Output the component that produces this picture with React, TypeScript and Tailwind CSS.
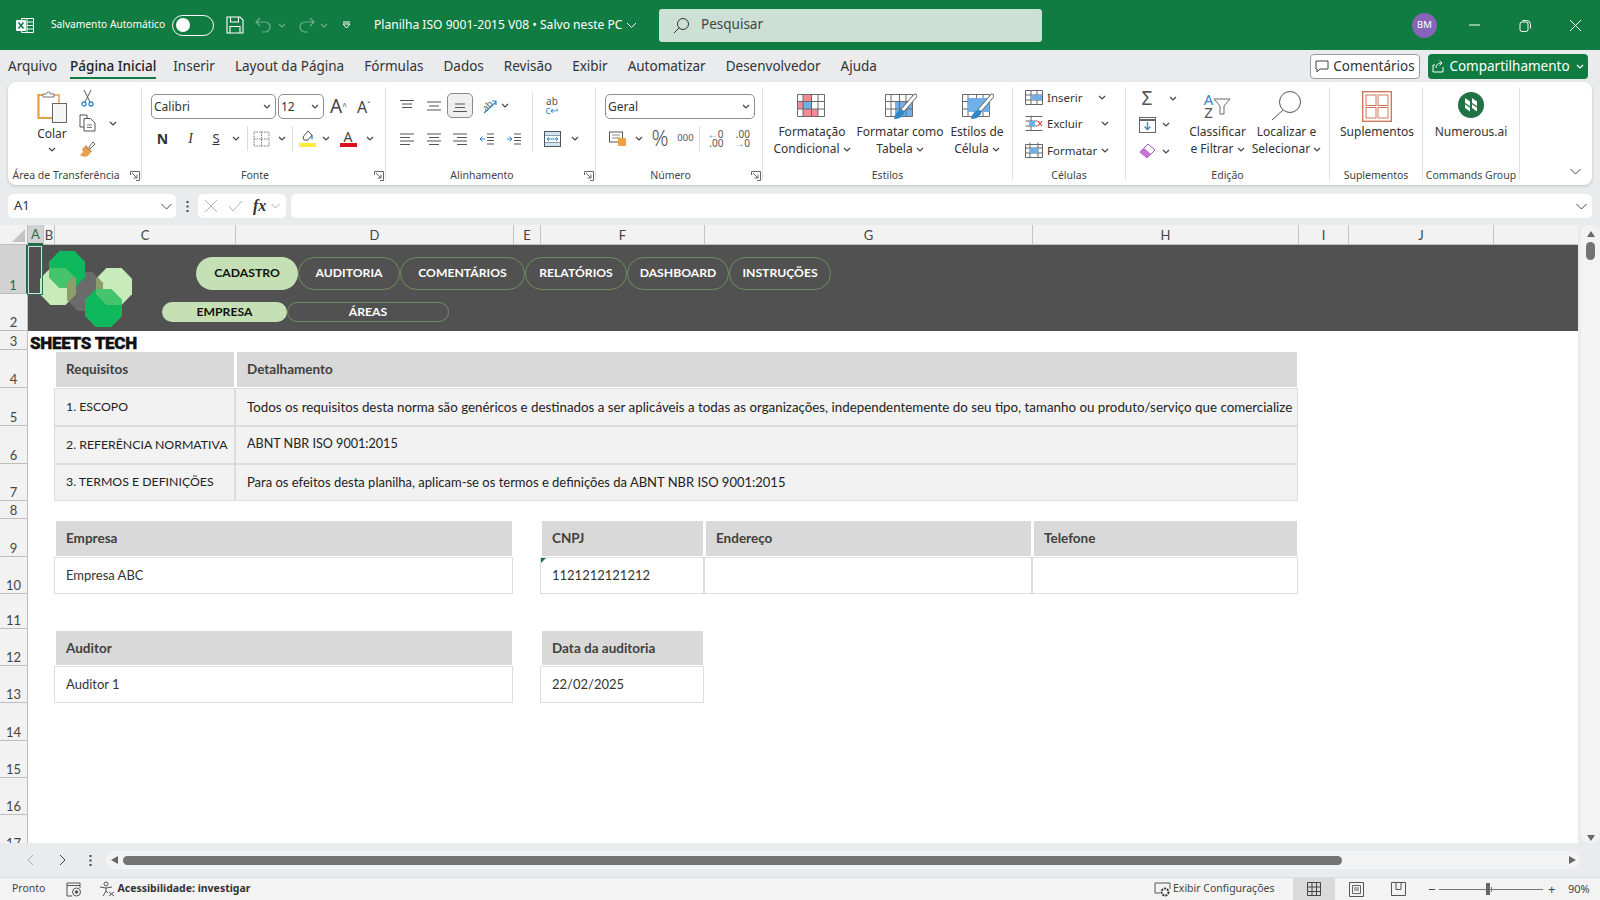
import type { ReactNode } from 'react'

const octa = (x: number, y: number, w: number, h: number) => {
  const a = w * 0.29
  const b = h * 0.29
  return [
    [x + a, y], [x + w - a, y], [x + w, y + b], [x + w, y + h - b],
    [x + w - a, y + h], [x + a, y + h], [x, y + h - b], [x, y + b],
  ].map((p) => p.join(',')).join(' ')
}

const Chev = ({ className = 'text-[#444]' }: { className?: string }) => (
  <svg width="8" height="5" viewBox="0 0 8 5" className={`${className} shrink-0`}>
    <path d="M1 1l3 3 3-3" fill="none" stroke="currentColor" strokeWidth="1.2" />
  </svg>
)

const Launcher = () => (
  <svg width="10" height="10" viewBox="0 0 10 10" className="text-[#666]">
    <path d="M.5 4V.5H9.5V9.5H6M2 2l5 5M7 3.5V7H3.5" fill="none" stroke="currentColor" />
  </svg>
)

function Slot({ w, children }: { w: string; children?: ReactNode }) {
  return <div className={`${w} shrink-0 flex items-center justify-center`}>{children}</div>
}

function Group({ w, label, launcher, children }: { w: string; label: string; launcher?: boolean; children: ReactNode }) {
  return (
    <div className={`${w} shrink-0 h-full border-r border-[#e1e1e1] flex flex-col`}>
      <div className="flex-1 min-h-0">{children}</div>
      <div className={launcher
        ? 'h-[15px] -mb-[3px] pr-[17px] relative flex items-center justify-center text-[10.5px] text-[#444] whitespace-nowrap'
        : 'h-[15px] -mb-[3px] relative flex items-center justify-center text-[10.5px] text-[#444] whitespace-nowrap'}>
        {label}
        {launcher && (
          <span className="absolute right-[1px] top-[3px]">
            <Launcher />
          </span>
        )}
      </div>
    </div>
  )
}

function Select({ w, label }: { w: string; label: string }) {
  return (
    <div className={`${w} h-[25px] shrink-0 bg-white border border-[#8f8f8f] rounded-[5px] flex items-center justify-between pl-[2px] pr-[4px] text-[12px] text-[#333]`}>
      {label}
      <Chev />
    </div>
  )
}

function AlignIcon({ lines }: { lines: string }) {
  return (
    <svg width="16" height="14" viewBox="0 0 16 14" className="text-[#555]">
      <path d={lines} stroke="currentColor" strokeWidth="1.1" fill="none" />
    </svg>
  )
}

const GridIcon = ({ children }: { children?: ReactNode }) => (
  <svg width="34" height="28" viewBox="0 0 34 28">
    {children}
  </svg>
)

const GRID_LINES = 'M2.5 2.5h27v22h-27zM2.5 9.500h27M2.5 17h27M8 2.500v22M16.500 2.500v22M23 2.500v22'

const Brush = () => (
  <>
    <path d="M32 4L20 18" stroke="#666" strokeWidth="4.500" strokeLinecap="round" />
    <path d="M32 4L20 18" stroke="#fff" strokeWidth="2.800" strokeLinecap="round" />
    <path d="M11 27c1-5 4-9 8-9 3 0 3 3 1 5-2 3-5 4-9 4z" fill="#2f86c9" />
  </>
)

function SmallRow({ icon, label, chev }: { icon: ReactNode; label: string; chev: string }) {
  return (
    <div className="h-[26.5px] flex items-center text-[11.5px] text-[#333]">
      <Slot w="w-[20px]">{icon}</Slot>
      <span className="ml-[3px] whitespace-nowrap">{label}</span>
      <span className={`${chev} flex`}>
        <Chev />
      </span>
    </div>
  )
}

function BigButton({ w, icon, lines }: { w: string; icon: ReactNode; lines: string[] }) {
  return (
    <div className={`${w} shrink-0 flex flex-col items-center text-[12px] leading-[16.8px] text-[#333]`}>
      <div className="h-[36px] flex items-center justify-center">{icon}</div>
      {lines.map((l, i) => (
        <div key={l} className="flex items-center gap-[3px] whitespace-nowrap">
          {l}
          {i === lines.length - 1 && lines.length > 1 && <Chev />}
        </div>
      ))}
    </div>
  )
}

function TitleBar() {
  return (
    <div className="h-[50px] shrink-0 bg-[#107c41] flex items-center text-white">
      <div className="ml-[16px] w-[18px]">
        <svg width="18" height="17" viewBox="0 0 18 17">
          <path d="M5.5 1.5h12v14h-12zM11 1.5v14M11 5h6.5M11 8.5h6.5M11 12h6.5" fill="none" stroke="#fff" />
          <rect x="0" y="3" width="10" height="11" rx="1" fill="#fff" />
          <path d="M2.5 5.5l5 6M7.5 5.5l-5 6" stroke="#107c41" strokeWidth="1.5" />
        </svg>
      </div>
      <span className="ml-[17px] text-[10.2px] whitespace-nowrap w-[121px]">Salvamento Automático</span>
      <div className="w-[42px] h-[21px] rounded-full border border-white bg-[#107c41] flex items-center px-[3px]">
        <div className="w-[14px] h-[14px] rounded-full bg-white" />
      </div>
      <svg width="18" height="18" viewBox="0 0 18 18" className="ml-[12px]">
        <path d="M1 1h13l3 3v13H1zM4.5 1v5h8V1M4 17v-6.5h10V17" fill="none" stroke="#fff" strokeWidth="1.1" />
      </svg>
      <svg width="20" height="16" viewBox="0 0 20 16" className="ml-[10px] text-[#6fae8b]">
        <path d="M6 1L2 5l4 4M2 5h9a5 5 0 010 10H8" fill="none" stroke="currentColor" strokeWidth="1.2" />
      </svg>
      <Chev className="ml-[4px] text-[#6fae8b]" />
      <svg width="20" height="16" viewBox="0 0 20 16" className="ml-[10px] text-[#6fae8b]">
        <path d="M14 1l4 4-4 4M18 5H9a5 5 0 000 10h3" fill="none" stroke="currentColor" strokeWidth="1.2" />
      </svg>
      <Chev className="ml-[4px] text-[#6fae8b]" />
      <svg width="9" height="8" viewBox="0 0 9 8" className="ml-[14px]">
        <path d="M1 1h7M1 3l3.5 4L8 3z" fill="none" stroke="#fff" />
      </svg>
      <span className="ml-[23px] text-[12.1px] whitespace-nowrap w-[252px]">Planilha ISO 9001-2015 V08 • Salvo neste PC</span>
      <svg width="11" height="7" viewBox="0 0 11 7">
        <path d="M1 1l4.5 4.500L10 1" fill="none" stroke="#fff" />
      </svg>
      <div className="ml-[22px] w-[383px] h-[33px] bg-[#cce0d5] rounded-[3px] flex items-center text-[#444] text-[13.500px]">
        <svg width="17" height="17" viewBox="0 0 17 17" className="ml-[14px]">
          <circle cx="10" cy="7" r="5.500" fill="none" stroke="#333" />
          <path d="M6 11l-5 5" stroke="#333" />
        </svg>
        <span className="ml-[11px] -mt-[1px]">Pesquisar</span>
      </div>
      <div className="ml-[370px] w-[25px] h-[25px] rounded-full bg-[#8764b8] flex items-center justify-center text-[9.500px]">BM</div>
      <svg width="12" height="2" viewBox="0 0 12 2" className="ml-[32px]">
        <path d="M0 1h11" stroke="#fff" />
      </svg>
      <svg width="13" height="13" viewBox="0 0 13 13" className="ml-[38px]">
        <path d="M3.500 1.500h4a4 4 0 014 4v4" fill="none" stroke="#fff" />
        <rect x="1" y="3" width="8" height="9.500" rx="2" fill="none" stroke="#fff" />
      </svg>
      <svg width="13" height="13" viewBox="0 0 13 13" className="ml-[37px]">
        <path d="M1 1l11 11M12 1L1 12" stroke="#fff" />
      </svg>
    </div>
  )
}

const TABS = ['Arquivo', 'Página Inicial', 'Inserir', 'Layout da Página', 'Fórmulas', 'Dados', 'Revisão', 'Exibir', 'Automatizar', 'Desenvolvedor', 'Ajuda']

function TabBar() {
  return (
    <div className="h-[32px] shrink-0 flex items-center pl-[8px] pr-[12px] text-[13.5px] text-[#333]">
      <div className="flex gap-[20px]">
        {TABS.map((t) => (
          <div key={t} className={t === 'Página Inicial' ? 'relative -ml-[7px] -mr-[3px] font-medium text-[#222] whitespace-nowrap' : 'whitespace-nowrap'}>
            {t}
            {t === 'Página Inicial' && <div className="absolute left-0 right-0 -bottom-[3px] h-[2px] bg-[#107c41]" />}
          </div>
        ))}
      </div>
      <div className="ml-auto flex gap-[8px]">
        <div className="w-[110px] h-[25px] bg-white border border-[#9a9a9a] rounded-[4px] flex items-center justify-center gap-[4px]">
          <svg width="14" height="13" viewBox="0 0 14 13">
            <path d="M1 1h12v8H5l-3 3V9H1z" fill="none" stroke="#444" />
          </svg>
          Comentários
        </div>
        <div className="w-[160px] h-[25px] bg-[#107c41] rounded-[4px] flex items-center justify-center gap-[4px] text-white">
          <svg width="13" height="13" viewBox="0 0 13 13">
            <path d="M3 5H1v7h10V7M4 8c0-3 2-5 6-5M7.500 1L10 3 7.500 5.500" fill="none" stroke="#fff" />
          </svg>
          Compartilhamento
          <Chev className="text-white ml-[2px]" />
        </div>
      </div>
    </div>
  )
}

function Ribbon() {
  return (
    <div className="mx-[8px] h-[103px] shrink-0 bg-white rounded-[8px] shadow-[0_1px_3px_rgba(0,0,0,0.18)] flex py-[5px]">
      <Group w="w-[134px]" label="Área de Transferência" launcher>
        <div className="flex h-full">
          <div className="ml-[9px] w-[70px] flex flex-col items-center pt-[3px] text-[12px] text-[#333]">
            <svg width="30" height="33" viewBox="0 0 30 33">
              <path d="M6 5H1.500v23H15" fill="none" stroke="#e2a04d" strokeWidth="2.200" />
              <path d="M16 5h6v8" fill="none" stroke="#e2a04d" strokeWidth="1.500" />
              <path d="M6 7V4h3.500a2 2 0 014 0H17v3z" fill="#fff" stroke="#777" />
              <rect x="15.500" y="13.500" width="14" height="19" fill="#f5f5f5" stroke="#666" />
            </svg>
            <div className="mt-[3px] leading-[16px]">Colar</div>
            <div className="mt-[5px]"><Chev /></div>
          </div>
          <div className="-ml-[10px] -mt-[2px] flex flex-col pt-[1px]">
            <div className="h-[24px] w-[20px] flex items-center justify-center">
              <svg width="13" height="18" viewBox="0 0 13 18">
                <path d="M3 1l6 12M10 1L4 13" stroke="#555" />
                <circle cx="3" cy="15" r="2" fill="none" stroke="#2f86c9" strokeWidth="1.300" />
                <circle cx="10" cy="15" r="2" fill="none" stroke="#2f86c9" strokeWidth="1.300" />
              </svg>
            </div>
            <div className="h-[26px] flex items-center">
              <Slot w="w-[20px]">
                <svg width="17" height="18" viewBox="0 0 17 18">
                  <path d="M5 13H1V1h7v3" fill="none" stroke="#555" />
                  <path d="M5 4.500h6.500L16 9v8H5z" fill="#fff" stroke="#555" />
                  <path d="M8 11h5M8 13.500h5" stroke="#777" />
                </svg>
              </Slot>
              <span className="ml-[12px] flex"><Chev /></span>
            </div>
            <div className="h-[27px] w-[20px] flex items-center justify-center">
              <svg width="17" height="17" viewBox="0 0 17 17">
                <path d="M10 6l4-5 2 2-5 5z" fill="#fff" stroke="#666" />
                <path d="M7 4l6 6-4 5c-3 1-5 1-8-1l3-3-1-3z" fill="#e7a24b" />
                <path d="M6 5l6 6" stroke="#888" />
              </svg>
            </div>
          </div>
        </div>
      </Group>

      <Group w="w-[244px]" label="Fonte" launcher>
        <div className="pl-[9px] pt-[7px]">
          <div className="flex items-center">
            <Select w="w-[125px]" label="Calibri" />
            <Select w="w-[46px] ml-[2px]" label="12" />
            <span className="ml-[6px] w-[27px] text-[19px] leading-none text-[#444] whitespace-nowrap">A<sup className="text-[8px]">^</sup></span>
            <span className="w-[20px] text-[16px] leading-none text-[#444] whitespace-nowrap">A<sup className="text-[8px]">ˇ</sup></span>
          </div>
          <div className="mt-[7px] h-[25px] flex items-center text-[#333]">
            <Slot w="w-[23px]"><b className="text-[14px] font-bold">N</b></Slot>
            <Slot w="w-[33px]"><i className="text-[14px] font-['Liberation_Serif',serif]">I</i></Slot>
            <Slot w="w-[18px]"><u className="text-[13px]">S</u></Slot>
            <Slot w="w-[22px]"><Chev /></Slot>
            <div className="w-px h-[25px] bg-[#ddd]" />
            <Slot w="w-[27px]">
              <svg width="17" height="16" viewBox="0 0 17 16">
                <path d="M1 1h15v14H1zM8.500 1v14M1 8h15" fill="none" stroke="#7a7a7a" strokeDasharray="1.500 1" />
              </svg>
            </Slot>
            <Slot w="w-[14px]"><Chev /></Slot>
            <Slot w="w-[3px]" />
            <div className="w-px h-[25px] bg-[#ddd]" />
            <Slot w="w-[28px]">
              <svg width="17" height="19" viewBox="0 0 17 19">
                <path d="M4 8l5-6 4 4-4 5H5z" fill="#fff" stroke="#555" />
                <path d="M13 6v4" stroke="#2f86c9" strokeWidth="1.500" />
                <rect x="0" y="14" width="17" height="4" fill="#ffeb3b" />
              </svg>
            </Slot>
            <Slot w="w-[9px]"><Chev /></Slot>
            <Slot w="w-[36px]">
              <div className="flex flex-col items-center leading-none">
                <span className="text-[14px] leading-[13px] text-[#444]">A</span>
                <div className="w-[17px] h-[4px] bg-[#d8121c]" />
              </div>
            </Slot>
            <Slot w="w-[8px]"><Chev /></Slot>
          </div>
        </div>
      </Group>

      <Group w="w-[210px]" label="Alinhamento" launcher>
        <div className="pt-[6px] flex">
          <div className="pl-[8px]">
            <div className="flex items-center h-[25px]">
              <Slot w="w-[26px]"><AlignIcon lines="M1 1.500h14M3 5h10M3 8.500h10" /></Slot>
              <Slot w="w-[27px]"><AlignIcon lines="M1 3h14M3 7h10M1 11h14" /></Slot>
              <div className="w-[26px] h-[25px] bg-[#efefef] border border-[#8a8a8a] rounded-[5px] flex items-center justify-center">
                <AlignIcon lines="M3 5h10M3 8.500h10M1 12.500h14" />
              </div>
              <Slot w="w-[28px]">
                <div className="relative w-[20px] h-[17px] flex items-center justify-center">
                  <span className="-rotate-45 text-[9px] leading-none text-[#555]">ab</span>
                  <svg width="20" height="17" viewBox="0 0 20 17" className="absolute inset-0">
                    <path d="M7 16L19 5M15 4h4v4" fill="none" stroke="#2f86c9" strokeWidth="1.200" />
                  </svg>
                </div>
              </Slot>
              <Chev />
            </div>
            <div className="mt-[8px] flex items-center h-[25px]">
              <Slot w="w-[26px]"><AlignIcon lines="M1 2h14M1 5.500h10M1 9h14M1 12.500h10" /></Slot>
              <Slot w="w-[27px]"><AlignIcon lines="M1 2h14M3 5.500h10M1 9h14M3 12.500h10" /></Slot>
              <Slot w="w-[26px]"><AlignIcon lines="M1 2h14M5 5.500h10M1 9h14M5 12.500h10" /></Slot>
              <Slot w="w-[27px]">
                <svg width="16" height="14" viewBox="0 0 16 14">
                  <path d="M8 2h7M8 12h7" stroke="#555" />
                  <path d="M8 5.500h7M8 8.500h7" stroke="#555" />
                  <path d="M6 7H1M3.500 4.500L1 7l2.500 2.500" fill="none" stroke="#2f86c9" />
                </svg>
              </Slot>
              <Slot w="w-[27px]">
                <svg width="16" height="14" viewBox="0 0 16 14">
                  <path d="M8 2h7M8 12h7M8 5.500h7M8 8.500h7" stroke="#555" />
                  <path d="M1 7h5M3.500 4.500L6 7 3.500 9.500" fill="none" stroke="#2f86c9" />
                </svg>
              </Slot>
            </div>
          </div>
          <div className="w-px h-[58px] bg-[#ddd] ml-[5px]" />
          <div className="w-[60px] pl-[8px]">
            <div className="h-[25px] w-[22px] flex flex-col items-center justify-center text-[10px] leading-[9px] text-[#555]">
              ab
              <span className="text-[#2f86c9]">c↩</span>
            </div>
            <div className="mt-[8px] flex h-[25px] items-center">
              <Slot w="w-[22px]">
                <svg width="17" height="16" viewBox="0 0 17 16">
                  <rect x=".5" y=".5" width="16" height="15" fill="#cfe4f5" stroke="#555" />
                  <path d="M.5 5h16M.5 11h16" stroke="#555" />
                  <rect x="1" y="5" width="15" height="6" fill="#fff" />
                  <path d="M3 8h11M5 6l-2 2 2 2M12 6l2 2-2 2" fill="none" stroke="#2f86c9" />
                </svg>
              </Slot>
              <span className="ml-[8px] flex"><Chev /></span>
            </div>
          </div>
        </div>
      </Group>

      <Group w="w-[167px]" label="Número" launcher>
        <div className="pl-[9px] pt-[7px]">
          <Select w="w-[150px]" label="Geral" />
          <div className="mt-[7px] h-[25px] flex items-center text-[#555]">
            <Slot w="w-[26px]">
              <svg width="18" height="16" viewBox="0 0 18 16">
                <rect x=".5" y="1" width="13" height="10" fill="#fff" stroke="#555" />
                <path d="M3 4h8M3 7h8" stroke="#888" />
                <rect x="9" y="7" width="8" height="8" rx="1" fill="#f0a040" />
              </svg>
            </Slot>
            <Slot w="w-[15px]"><Chev /></Slot>
            <Slot w="w-[28px]"><span className="text-[21px] font-light leading-none">%</span></Slot>
            <Slot w="w-[23px]"><span className="text-[9.500px]">000</span></Slot>
            <div className="w-px h-[25px] bg-[#ddd] mx-[2px]" />
            <Slot w="w-[27px]">
              <span className="flex flex-col text-[10px] leading-[9px] items-end">
                <span><span className="text-[#2f86c9]">←</span>0</span>
                <span>.00</span>
              </span>
            </Slot>
            <Slot w="w-[26px]">
              <span className="flex flex-col text-[10px] leading-[9px] items-end">
                <span>.00</span>
                <span><span className="text-[#2f86c9]">→</span>0</span>
              </span>
            </Slot>
          </div>
        </div>
      </Group>

      <Group w="w-[250px]" label="Estilos">
        <div className="flex pl-[4px] pt-[1px]">
          <BigButton
            w="w-[90px]"
            lines={['Formatação', 'Condicional']}
            icon={
              <GridIcon>
                <rect x="8" y="2.500" width="8.500" height="7" fill="#f58a94" />
                <rect x="2.500" y="9.500" width="5.500" height="7.500" fill="#f58a94" />
                <rect x="8" y="9.500" width="8.500" height="7.500" fill="#6fb0e8" />
                <rect x="8" y="17" width="15" height="7.500" fill="#f58a94" />
                <path d={GRID_LINES} fill="none" stroke="#6b6b6b" />
              </GridIcon>
            }
          />
          <BigButton
            w="w-[86px]"
            lines={['Formatar como', 'Tabela']}
            icon={
              <GridIcon>
                <rect x="12" y="9.500" width="17.500" height="15" fill="#6fb0e8" />
                <path d={GRID_LINES} fill="none" stroke="#6b6b6b" />
                <Brush />
              </GridIcon>
            }
          />
          <BigButton
            w="w-[68px]"
            lines={['Estilos de', 'Célula']}
            icon={
              <GridIcon>
                <path d={GRID_LINES} fill="none" stroke="#6b6b6b" />
                <rect x="8" y="6" width="21.500" height="14" fill="#6fb0e8" />
                <Brush />
              </GridIcon>
            }
          />
        </div>
      </Group>

      <Group w="w-[113px]" label="Células">
        <div className="pl-[11px] -mt-[3px]">
          <SmallRow
            label="Inserir"
            chev="ml-[16px]"
            icon={
              <svg width="18" height="15" viewBox="0 0 18 15">
                <path d="M.5.500h17v14H.5zM.5 5h17M.5 10h17M6 .500v14M12 .500v14" fill="none" stroke="#666" />
                <rect x="6" y="5" width="11" height="5" fill="#6fb0e8" />
              </svg>
            }
          />
          <SmallRow
            label="Excluir"
            chev="ml-[18px]"
            icon={
              <svg width="18" height="15" viewBox="0 0 18 15">
                <path d="M.5.500h17M.5 14.500h17M.5 5h12M.5 10h12M6 .500v14" fill="none" stroke="#666" />
                <rect x="4" y="5" width="6" height="5" fill="#6fb0e8" />
                <path d="M13 5l4 5M17 5l-4 5" stroke="#d8121c" />
              </svg>
            }
          />
          <SmallRow
            label="Formatar"
            chev="ml-[4px]"
            icon={
              <svg width="18" height="16" viewBox="0 0 18 16">
                <path d="M.5 2.500h17v13H.5zM.5 6h17M.5 11h17M5 .500v15M13 .500v15" fill="none" stroke="#666" />
                <rect x="5" y="6" width="8" height="5" fill="#6fb0e8" />
              </svg>
            }
          />
        </div>
      </Group>

      <Group w="w-[204px]" label="Edição">
        <div className="flex pt-[1px]">
          <div className="w-[58px] pl-[11px] -mt-[3px]">
            <div className="h-[26.500px] flex items-center">
              <Slot w="w-[20px]"><span className="text-[19px] leading-none text-[#555]">Σ</span></Slot>
              <span className="ml-[12px] flex"><Chev /></span>
            </div>
            <div className="h-[26.500px] flex items-center">
              <Slot w="w-[20px]">
                <svg width="17" height="16" viewBox="0 0 17 16">
                  <rect x=".5" y=".5" width="16" height="15" fill="#fff" stroke="#666" />
                  <path d="M.5 3h16" stroke="#666" strokeWidth="2" />
                  <path d="M8.500 5v7M5.500 9.500l3 3 3-3" fill="none" stroke="#2f86c9" strokeWidth="1.300" />
                </svg>
              </Slot>
              <span className="ml-[5px] flex"><Chev /></span>
            </div>
            <div className="h-[26.500px] flex items-center">
              <Slot w="w-[20px]">
                <svg width="17" height="16" viewBox="0 0 17 16">
                  <path d="M1 9l8-8 7 6-8 8z" fill="#fff" stroke="#a44fb8" />
                  <path d="M1 9l4-4 7 6-4 4z" fill="#c774d8" />
                </svg>
              </Slot>
              <span className="ml-[5px] flex"><Chev /></span>
            </div>
          </div>
          <BigButton
            w="w-[67px]"
            lines={['Classificar', 'e Filtrar']}
            icon={
              <div className="flex items-center leading-[13px] text-[15px]">
                <div className="flex flex-col items-center">
                  <span className="text-[#2f86c9]">A</span>
                  <span className="text-[#555]">Z</span>
                </div>
                <svg width="18" height="18" viewBox="0 0 18 18">
                  <path d="M1 2h16l-6 7v8H7V9z" fill="#fff" stroke="#666" />
                </svg>
              </div>
            }
          />
          <BigButton
            w="w-[71px]"
            lines={['Localizar e', 'Selecionar']}
            icon={
              <svg width="31" height="30" viewBox="0 0 31 30">
                <circle cx="19" cy="11" r="10.500" fill="none" stroke="#555" />
                <path d="M12 19L1 29" stroke="#555" />
              </svg>
            }
          />
        </div>
      </Group>

      <Group w="w-[93px]" label="Suplementos">
        <div className="flex justify-center pl-[2px] pt-[1px]">
          <BigButton
            w="w-[90px]"
            lines={['Suplementos']}
            icon={
              <svg width="30" height="31" viewBox="0 0 30 31">
                <rect x=".7" y=".7" width="28.600" height="29.600" fill="none" stroke="#cf7b5a" strokeWidth="1.400" />
                <rect x="4" y="4" width="10" height="10.500" fill="none" stroke="#cf7b5a" />
                <rect x="16" y="4" width="10" height="10.500" fill="none" stroke="#cf7b5a" />
                <rect x="4" y="16.500" width="10" height="10.500" fill="none" stroke="#cf7b5a" />
                <rect x="16" y="16.500" width="10" height="10.500" fill="none" stroke="#cf7b5a" />
              </svg>
            }
          />
        </div>
      </Group>

      <Group w="w-[97px]" label="Commands Group">
        <div className="flex justify-center pt-[1px]">
          <BigButton
            w="w-[90px]"
            lines={['Numerous.ai']}
            icon={
              <svg width="26" height="26" viewBox="0 0 26 26" className="-mt-[2px]">
                <circle cx="13" cy="13" r="13" fill="#217346" />
                <path d="M7 6l5 3.500v10L7 16zM14 6l5 3.500v10L14 16z" fill="#fff" />
                <path d="M7 11.500l5 3.500M14 11.500l5 3.500" stroke="#217346" strokeWidth="1.200" />
              </svg>
            }
          />
        </div>
      </Group>

      <div className="flex-1 flex items-end justify-end pr-[11px] pb-[5px]">
        <svg width="11" height="7" viewBox="0 0 11 7">
          <path d="M.5 1l5 5 5-5" fill="none" stroke="#444" />
        </svg>
      </div>
    </div>
  )
}

function FormulaBar() {
  return (
    <div className="mt-[9px] mx-[8px] h-[24px] shrink-0 flex items-stretch text-[13px] text-[#333]">
      <div className="w-[168px] bg-white rounded-[5px] flex items-center justify-between pl-[6px] pr-[4px]">
        A1
        <svg width="11" height="7" viewBox="0 0 11 7">
          <path d="M.5 1l5 5 5-5" fill="none" stroke="#444" />
        </svg>
      </div>
      <div className="w-[22px] flex items-center justify-center">
        <svg width="3" height="13" viewBox="0 0 3 13">
          <path d="M1.500 1v2M1.500 5.500v2M1.500 10v2" stroke="#444" strokeWidth="2" />
        </svg>
      </div>
      <div className="w-[88px] bg-white rounded-[5px] flex items-center pl-[6px]">
        <svg width="14" height="14" viewBox="0 0 14 14">
          <path d="M1 1l12 12M13 1L1 13" stroke="#b5b5b5" />
        </svg>
        <svg width="15" height="12" viewBox="0 0 15 12" className="ml-[10px]">
          <path d="M1 6l4 5 9-10" fill="none" stroke="#b5b5b5" />
        </svg>
        <i className="ml-[10px] font-['Liberation_Serif',serif] font-bold text-[16px] leading-none text-[#333]">fx</i>
        <svg width="9" height="6" viewBox="0 0 9 6" className="ml-[5px]">
          <path d="M.5 1l4 4 4-4" fill="none" stroke="#aaa" />
        </svg>
      </div>
      <div className="ml-[5px] flex-1 bg-white rounded-[5px] flex items-center justify-end pr-[5px]">
        <svg width="11" height="7" viewBox="0 0 11 7">
          <path d="M.5 1l5 5 5-5" fill="none" stroke="#444" />
        </svg>
      </div>
    </div>
  )
}

const COLS = [
  ['A', 'col-start-2'],
  ['B', 'col-start-3'],
  ['C', 'col-start-4'],
  ['D', 'col-start-5'],
  ['E', 'col-start-6'],
  ['F', 'col-start-7'],
  ['G', 'col-start-8'],
  ['H', 'col-start-9'],
  ['I', 'col-start-10'],
  ['J', 'col-start-11'],
  ['', 'col-start-12'],
]

const ROW_LABELS = [
  'row-start-2', 'row-start-3', 'row-start-4', 'row-start-5', 'row-start-6', 'row-start-7',
  'row-start-8', 'row-start-9', 'row-start-10', 'row-start-11', 'row-start-12', 'row-start-13', 'row-start-14',
  'row-start-15', 'row-start-16', 'row-start-17', 'row-start-18',
]

const head = 'bg-[#d9d9d9] text-[#404040] font-bold text-[13.5px] flex items-center pl-[10px] ml-[2px] mr-[1px] mt-[2px] mb-[1px]'
const cell = 'bg-white border border-[#dedede] text-[#333] flex items-center pl-[11px]'
const reqCell = 'bg-[#f2f2f2] border border-[#dcdcdc] text-[#222] flex items-center pl-[11px] whitespace-nowrap overflow-hidden'

const MENU = ['CADASTRO', 'AUDITORIA', 'COMENTÁRIOS', 'RELATÓRIOS', 'DASHBOARD', 'INSTRUÇÕES']

function Band() {
  return (
    <div className="col-start-2 col-span-11 row-start-2 row-span-2 bg-[#515151] relative font-['Lato',sans-serif] font-bold text-[12.2px] pt-[12px]">
      <svg width="92" height="76" viewBox="0 0 92 76" className="absolute left-[12px] top-[6px]">
        <defs>
          <clipPath id="lt"><polygon points={octa(0, 17, 36, 37)} /></clipPath>
          <clipPath id="rt"><polygon points={octa(56, 17, 36, 37)} /></clipPath>
        </defs>
        <polygon points={octa(0, 17, 36, 37)} fill="#c8ebbb" />
        <polygon points={octa(56, 17, 36, 37)} fill="#c8ebbb" />
        <polygon points={octa(27, 21, 36, 39)} fill="#6b6b6b" />
        <polygon points={octa(9, 0, 36, 37)} fill="#0fb85c" />
        <polygon points={octa(9, 0, 36, 37)} fill="#44c56b" clipPath="url(#lt)" />
        <polygon points={octa(27, 21, 36, 39)} fill="#8e9e68" clipPath="url(#lt)" />
        <polygon points={octa(27, 21, 36, 39)} fill="#8e9e68" clipPath="url(#rt)" />
        <polygon points={octa(45, 38, 37, 38)} fill="#0fb85c" />
        <polygon points={octa(45, 38, 37, 38)} fill="#44c56b" clipPath="url(#rt)" />
      </svg>
      <div className="ml-[168px] flex h-[33px] text-white">
        {MENU.map((m, i) => (
          <div
            key={m}
            className={
              i === 0
                ? 'w-[102px] rounded-full bg-[#c5e0b4] text-[#111] flex items-center justify-center'
                : i === 2
                  ? 'w-[125px] rounded-full border border-[#6f8f5c] flex items-center justify-center'
                  : 'w-[102px] rounded-full border border-[#6f8f5c] flex items-center justify-center'
            }
          >
            {m}
          </div>
        ))}
      </div>
      <div className="mt-[12px] ml-[134px] flex h-[20px] text-white">
        <div className="w-[125px] rounded-full bg-[#c5e0b4] text-[#111] flex items-center justify-center">EMPRESA</div>
        <div className="w-[162px] rounded-full border border-[#6f8f5c] flex items-center justify-center">ÁREAS</div>
      </div>
    </div>
  )
}

function Sheet() {
  return (
    <div className="mt-[7px] h-[618px] shrink-0 flex">
      <div className="w-[1578px] h-full overflow-hidden bg-white grid grid-cols-[28px_15px_11px_181px_278px_27px_164px_328px_266px_50px_145px_1fr] grid-rows-[20px_49px_37px_19px_38px_38px_37.5px_37.5px_18px_38px_37px_35px_37px_37px_38px_37px_37px_37px] font-['Lato',sans-serif] text-[13px]">
        <div className="col-start-1 row-start-1 bg-[#f2f2f2] border-r border-b border-[#bdbdbd] flex items-end justify-end">
          <div className="w-0 h-0 border-l-[13px] border-l-transparent border-b-[13px] border-b-[#c4c4c4] mr-[2px] mb-[2px]" />
        </div>
        {COLS.map(([name, pos]) => (
          <div
            key={pos}
            className={name === 'A'
              ? `${pos} row-start-1 bg-[#d2d2d2] text-[#1d6f42] border-b-2 border-b-[#1d6f42] text-[13px] pt-[2px] flex items-center justify-center`
              : `${pos} row-start-1 bg-[#f2f2f2] text-[#444] border-l border-l-[#c4c4c4] border-b border-b-[#bdbdbd] text-[13px] pt-[2px] flex items-center justify-center`}
          >
            {name}
          </div>
        ))}
        {ROW_LABELS.map((pos, i) => (
          <div
            key={pos}
            className={i === 0
              ? `${pos} col-start-1 bg-[#d2d2d2] text-[#1d6f42] border-r-2 border-r-[#1d6f42] border-b border-b-[#bdbdbd] text-[13px] leading-[15px] flex items-end justify-center`
              : `${pos} col-start-1 bg-[#f2f2f2] text-[#444] border-r border-r-[#bdbdbd] border-b border-b-[#bdbdbd] text-[13px] leading-[15px] flex items-end justify-center`}
          >
            {i + 1}
          </div>
        ))}

        <Band />
        <div className="col-start-2 row-start-2 -ml-[1px] -mb-[1px] border border-[#2c6e58] shadow-[inset_0_0_0_1px_#cfe0d8] z-10" />

        <div className="col-start-2 col-span-5 row-start-4 z-10 pl-[2px] pt-[3px] font-['Roboto',sans-serif] font-black text-[17px] leading-[19px] tracking-[-0.3px] text-[#111] [-webkit-text-stroke:0.4px_#111] whitespace-nowrap">
          SHEETS TECH
        </div>

        <div className={`col-start-4 row-start-5 ${head}`}>Requisitos</div>
        <div className={`col-start-5 col-span-5 row-start-5 ${head}`}>Detalhamento</div>

        <div className={`col-start-4 row-start-6 text-[12.3px] ${reqCell}`}>1. ESCOPO</div>
        <div className={`col-start-5 col-span-5 row-start-6 text-[13.34px] ${reqCell}`}>
          Todos os requisitos desta norma são genéricos e destinados a ser aplicáveis a todas as organizações, independentemente do seu tipo, tamanho ou produto/serviço que comercialize
        </div>
        <div className={`col-start-4 row-start-7 text-[12.3px] ${reqCell}`}>2. REFERÊNCIA NORMATIVA</div>
        <div className={`col-start-5 col-span-5 row-start-7 text-[12.6px] ${reqCell}`}>ABNT NBR ISO 9001:2015</div>
        <div className={`col-start-4 row-start-8 text-[12.3px] ${reqCell}`}>3. TERMOS E DEFINIÇÕES</div>
        <div className={`col-start-5 col-span-5 row-start-8 ${reqCell}`}>Para os efeitos desta planilha, aplicam-se os termos e definições da ABNT NBR ISO 9001:2015</div>

        <div className={`col-start-4 col-span-2 row-start-10 ${head}`}>Empresa</div>
        <div className={`col-start-7 row-start-10 ${head}`}>CNPJ</div>
        <div className={`col-start-8 row-start-10 ${head}`}>Endereço</div>
        <div className={`col-start-9 row-start-10 ${head}`}>Telefone</div>
        <div className={`col-start-4 col-span-2 row-start-11 ${cell}`}>Empresa ABC</div>
        <div className={`col-start-7 row-start-11 relative ${cell}`}>
          1121212121212
          <div className="absolute left-0 top-0 w-0 h-0 border-t-[5px] border-t-[#1e7145] border-r-[5px] border-r-transparent" />
        </div>
        <div className={`col-start-8 row-start-11 ${cell}`} />
        <div className={`col-start-9 row-start-11 ${cell}`} />

        <div className={`col-start-4 col-span-2 row-start-13 ${head}`}>Auditor</div>
        <div className={`col-start-7 row-start-13 ${head}`}>Data da auditoria</div>
        <div className={`col-start-4 col-span-2 row-start-14 ${cell}`}>Auditor 1</div>
        <div className={`col-start-7 row-start-14 ${cell}`}>22/02/2025</div>
      </div>

      <div className="flex-1 ml-[3px] bg-[#f3f3f3] rounded-[8px] flex flex-col items-center pt-[6px] pb-[2px]">
        <div className="w-0 h-0 border-x-[4px] border-x-transparent border-b-[6px] border-b-[#666]" />
        <div className="mt-[5px] w-[9px] h-[18px] rounded-full bg-[#737373]" />
        <div className="mt-auto w-0 h-0 border-x-[4px] border-x-transparent border-t-[6px] border-t-[#666]" />
      </div>
    </div>
  )
}

function ScrollRow() {
  return (
    <div className="h-[34px] shrink-0 flex items-center">
      <svg width="8" height="12" viewBox="0 0 8 12" className="ml-[26px]">
        <path d="M7 1L2 6l5 5" fill="none" stroke="#aaa" />
      </svg>
      <svg width="8" height="12" viewBox="0 0 8 12" className="ml-[25px]">
        <path d="M1 1l5 5-5 5" fill="none" stroke="#444" />
      </svg>
      <svg width="3" height="13" viewBox="0 0 3 13" className="ml-[22px]">
        <path d="M1.500 1v2M1.500 5.500v2M1.500 10v2" stroke="#444" strokeWidth="2" />
      </svg>
      <div className="ml-[14px] w-[1474px] h-[18px] bg-[#f3f3f3] rounded-full flex items-center pl-[5px] pr-[4px]">
        <div className="w-0 h-0 border-y-[4px] border-y-transparent border-r-[7px] border-r-[#666]" />
        <div className="ml-[5px] w-[1219px] h-[9px] rounded-full bg-[#737373]" />
        <div className="ml-auto w-0 h-0 border-y-[4px] border-y-transparent border-l-[7px] border-l-[#666]" />
      </div>
    </div>
  )
}

function StatusBar() {
  return (
    <div className="h-[23px] shrink-0 bg-[#f3f3f3] border-t border-[#dcdcdc] flex items-center text-[10.500px] text-[#444]">
      <span className="ml-[12px]">Pronto</span>
      <svg width="16" height="15" viewBox="0 0 16 15" className="ml-[21px]">
        <path d="M1 1h13M1 3.500h13M1 1v13h5M14 1v5" fill="none" stroke="#555" />
        <circle cx="10.500" cy="10" r="4" fill="none" stroke="#555" />
        <circle cx="10.500" cy="10" r="1.800" fill="#555" />
      </svg>
      <svg width="16" height="16" viewBox="0 0 16 16" className="ml-[17px]">
        <circle cx="7" cy="3" r="2" fill="none" stroke="#555" />
        <path d="M1 6l6 1 6-1M7 7v3l-3 5M7 10l2 2M10 11l5 4M15 11l-5 4" fill="none" stroke="#555" />
      </svg>
      <b className="ml-[2px] font-bold text-[#333]">Acessibilidade: investigar</b>
      <div className="ml-auto flex items-center h-full">
        <svg width="17" height="15" viewBox="0 0 17 15">
          <path d="M6 11H1V1h15v6" fill="none" stroke="#555" />
          <circle cx="11" cy="10" r="3.500" fill="none" stroke="#333" strokeWidth="2" strokeDasharray="2 1" />
        </svg>
        <span className="ml-[2px] text-[10.500px] w-[120px]">Exibir Configurações</span>
        <div className="w-[42px] h-full bg-[#dadada] flex items-center justify-center">
          <svg width="14" height="14" viewBox="0 0 14 14">
            <path d="M.5.500h13v13H.5zM.5 5h13M.5 9.500h13M5 .500v13M9.500 .500v13" fill="none" stroke="#444" />
          </svg>
        </div>
        <div className="w-[42px] flex items-center justify-center">
          <svg width="15" height="15" viewBox="0 0 15 15">
            <path d="M.5.500h14v14H.5z" fill="none" stroke="#555" />
            <path d="M3.500 3.500h8v8h-8zM5 6h5M5 8h5" fill="none" stroke="#666" />
          </svg>
        </div>
        <div className="w-[42px] flex items-center justify-center">
          <svg width="15" height="14" viewBox="0 0 15 14">
            <path d="M.5.500h14v13H.5zM5 .500v7h5v-7" fill="none" stroke="#555" />
          </svg>
        </div>
        <span className="ml-[9px] w-[10px] text-[13px] leading-none">−</span>
        <div className="relative ml-[1px] w-[104px] h-px bg-[#777]">
          <div className="absolute left-[47px] -top-[6px] w-[4px] h-[12px] bg-[#666]" />
          <div className="absolute left-[52px] -top-[2px] w-px h-[5px] bg-[#777]" />
        </div>
        <span className="ml-[5px] w-[20px] text-[13px] leading-none">+</span>
        <span className="w-[32px] text-[11px]">90%</span>
      </div>
    </div>
  )
}

export default function App() {
  return (
    <div className="w-[1600px] h-[900px] overflow-hidden flex flex-col bg-[#e9ebed] font-['Noto_Sans',sans-serif]">
      <TitleBar />
      <TabBar />
      <Ribbon />
      <FormulaBar />
      <Sheet />
      <ScrollRow />
      <StatusBar />
    </div>
  )
}
